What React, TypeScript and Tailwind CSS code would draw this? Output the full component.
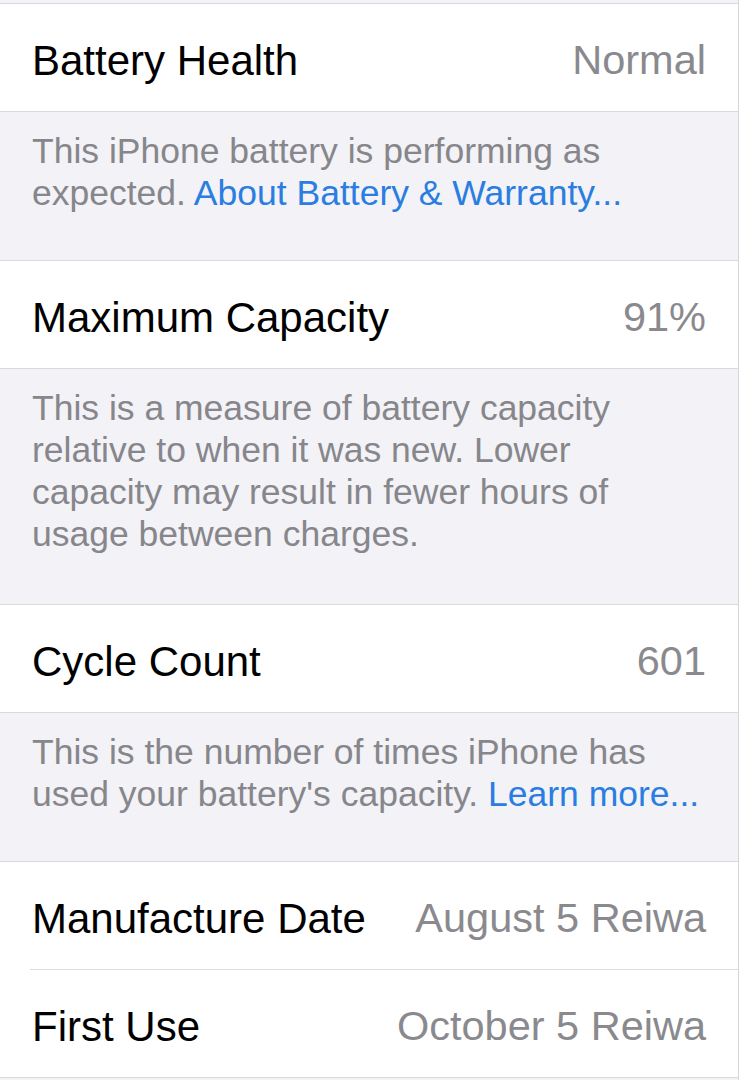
import React from 'react';

// Ligne de réglage : libellé à gauche, valeur grise à droite
function Row({ label, value }: { label: string; value: string }) {
  return (
    <div className="h-[107px] flex items-center justify-between px-[32px] pt-[5px] bg-white">
      <span className="text-[42px] text-black">{label}</span>
      <span className="text-[41.5px] text-[#8a8a8e]">{value}</span>
    </div>
  );
}

function Footer({ children, extra }: { children: React.ReactNode; extra?: boolean }) {
  return (
    <div
      className={`px-[32px] pt-[18px] ${extra ? 'pb-[49px]' : 'pb-[46px]'} text-[35.5px] leading-[42px] text-[#86868b]`}
    >
      {children}
    </div>
  );
}

export default function App() {
  return (
    <div
      className="min-h-screen bg-[#f2f2f7] pt-[3px] border-r border-[#d6d6da]"
      style={{ fontFamily: '"Liberation Sans", Arial, sans-serif' }}
    >
      <div className="border-y border-[#d9d9dd]">
        <Row label="Battery Health" value="Normal" />
      </div>
      <Footer>
        This iPhone battery is performing as
        <br />
        expected. <span className="text-[#2a7de1]">About Battery &amp; Warranty...</span>
      </Footer>

      <div className="border-y border-[#d9d9dd]">
        <Row label="Maximum Capacity" value="91%" />
      </div>
      <Footer extra>
        This is a measure of battery capacity
        <br />
        relative to when it was new. Lower
        <br />
        capacity may result in fewer hours of
        <br />
        usage between charges.
      </Footer>

      <div className="border-y border-[#d9d9dd]">
        <Row label="Cycle Count" value="601" />
      </div>
      <Footer>
        This is the number of times iPhone has
        <br />
        used your battery's capacity. <span className="text-[#2a7de1]">Learn more...</span>
      </Footer>

      <div className="border-y border-[#d9d9dd] bg-white">
        <Row label="Manufacture Date" value="August 5 Reiwa" />
        <div className="ml-[30px] h-px bg-[#dcdce0]" />
        <Row label="First Use" value="October 5 Reiwa" />
      </div>
    </div>
  );
}
